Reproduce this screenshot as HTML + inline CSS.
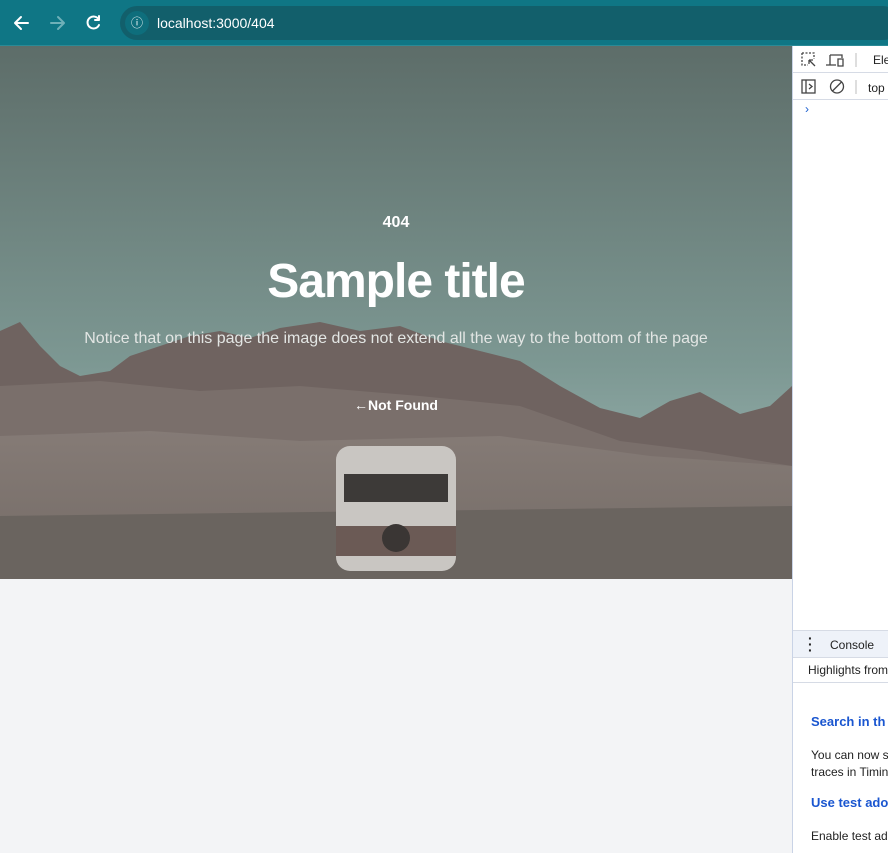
<!DOCTYPE html>
<html><head><meta charset="utf-8"><style>
*{margin:0;padding:0;box-sizing:border-box}
body{width:888px;height:853px;overflow:hidden;background:#f3f4f6;font-family:"Liberation Sans",sans-serif;position:relative}
.top{position:absolute;left:0;top:0;width:888px;height:46px;background:#0f7685;border-bottom:1px solid #2a8a96}
.url{position:absolute;left:120px;top:6px;width:780px;height:34px;border-radius:17px;background:#125f6b}
.url .i{position:absolute;left:5px;top:5px;width:24px;height:24px;border-radius:12px;background:#0e6e7c;color:#fff;font-size:12px;text-align:center;line-height:24px}
.url span{position:absolute;left:37px;top:9px;color:#fff;font-size:14px}
.hero{position:absolute;left:0;top:46px;width:792px;height:533px;overflow:hidden}
.t{position:absolute;left:0;width:792px;text-align:center;color:#fff}
.dev{position:absolute;left:792px;top:46px;width:96px;height:807px;background:#fff;border-left:1px solid #c9d3e6;font-size:12px;color:#222}
.nw{white-space:nowrap}
</style></head><body>
<div class="top">
<svg style="position:absolute;left:0;top:0" width="110" height="46" fill="none" stroke-width="2" stroke-linecap="round" stroke-linejoin="round">
<path d="M28 23H16M21 17l-6 6 6 6" stroke="#fff"/>
<path d="M51 23h12M58 17l6 6-6 6" stroke="#6fb0b8"/>
<path d="M99 20a6 6 0 1 0 0 5M99 16v4h-4" stroke="#fff"/>
</svg>
<div class="url"><div class="i">ⓘ</div><span>localhost:3000/404</span></div>
</div>
<div class="hero">
<svg width="792" height="533" viewBox="0 0 792 533">
<defs><linearGradient id="s" x1="0" y1="0" x2="0" y2="1"><stop offset="0" stop-color="#5d6d69"/><stop offset="0.6" stop-color="#7d9893"/><stop offset="1" stop-color="#a5bfbc"/></linearGradient>
<linearGradient id="g" x1="0" y1="0" x2="0" y2="1"><stop offset="0" stop-color="#857b76"/><stop offset="1" stop-color="#746b66"/></linearGradient></defs>
<rect width="792" height="533" fill="url(#s)"/>
<path d="M0 285 L20 276 L40 300 L60 320 L80 330 L110 325 L130 310 L160 300 L190 290 L220 285 L250 292 L280 282 L320 276 L360 285 L400 280 L440 295 L480 305 L520 315 L560 340 L600 362 L640 372 L670 355 L700 346 L740 368 L770 360 L792 340 L792 533 L0 533Z" fill="#6f6360"/>
<path d="M0 340 L100 335 L200 345 L300 340 L420 350 L520 360 L620 395 L700 405 L792 420 L792 533 L0 533Z" fill="#7a6f6b"/>
<path d="M0 390 L150 385 L300 395 L500 390 L650 410 L792 420 L792 533 L0 533Z" fill="url(#g)"/>
<path d="M0 470 L792 460 L792 533 L0 533Z" fill="#6a645f"/>
<rect x="336" y="400" width="120" height="125" rx="14" fill="#c9c6c2"/>
<rect x="344" y="428" width="104" height="28" fill="#3d3a38"/>
<rect x="336" y="480" width="120" height="30" fill="#6b5a55"/>
<circle cx="396" cy="492" r="14" fill="#3a3634"/>
</svg>
<div class="t" style="top:168px;font-size:16px;font-weight:bold">404</div>
<div class="t" style="top:208px;font-size:48px;font-weight:bold;letter-spacing:-1px">Sample title</div>
<div class="t" style="top:284px;font-size:16px;color:#e3e6e4">Notice that on this page the image does not extend all the way to the bottom of the page</div>
<div class="t" style="top:351px;font-size:14px;font-weight:bold">&#8592;Not Found</div>
</div>
<div class="dev">
<div style="height:27px;border-bottom:1px solid #d6dbe5;padding:7px 0 0 80px;position:relative">Ele
<svg style="position:absolute;left:8px;top:6px" width="60" height="16" fill="none" stroke="#444" stroke-width="1.3"><path d="M1 1h12v6M1 1v12h6" stroke-dasharray="2 1.5"/><path d="M8 8l6 6M8 8v4M8 8h4"/><path d="M29 3h12v3M29 3v10h6M25 13h10M37 7h5v7h-5z"/><path d="M55 1v14" stroke="#ccc"/></svg></div>
<div style="height:27px;border-bottom:1px solid #d6dbe5;padding:8px 0 0 75px;position:relative">top
<svg style="position:absolute;left:8px;top:6px" width="60" height="16" fill="none" stroke="#444" stroke-width="1.3"><rect x="1" y="1" width="13" height="13"/><path d="M5 1v13M8 5l3 2.5L8 10"/><circle cx="36" cy="7.5" r="6.5"/><path d="M31.5 12l9-9"/><path d="M55 1v14" stroke="#ccc"/></svg></div>
<div style="color:#1a5fd0;padding:2px 0 0 12px">›</div>
<div style="position:absolute;top:584px;left:0;width:96px;height:28px;background:#eef2f9;border-top:1px solid #d6dbe5;border-bottom:1px solid #d6dbe5;padding:7px 0 0 37px">Console<span style="position:absolute;left:15px;top:4px;font-weight:bold;line-height:6px;font-size:14px">·<br>·<br>·</span></div>
<div class="nw" style="position:absolute;top:617px;left:15px">Highlights from</div>
<div style="position:absolute;top:636px;left:0;width:96px;border-top:1px solid #d6dbe5"></div>
<div class="nw" style="position:absolute;top:668px;left:18px;color:#1a56d0;font-weight:bold;font-size:13px">Search in th</div>
<div class="nw" style="position:absolute;top:701px;left:18px;line-height:17px">You can now se<br>traces in Timin</div>
<div class="nw" style="position:absolute;top:749px;left:18px;color:#1a56d0;font-weight:bold;font-size:13px">Use test ado</div>
<div class="nw" style="position:absolute;top:783px;left:18px">Enable test ado</div>
</div>
</body></html>
